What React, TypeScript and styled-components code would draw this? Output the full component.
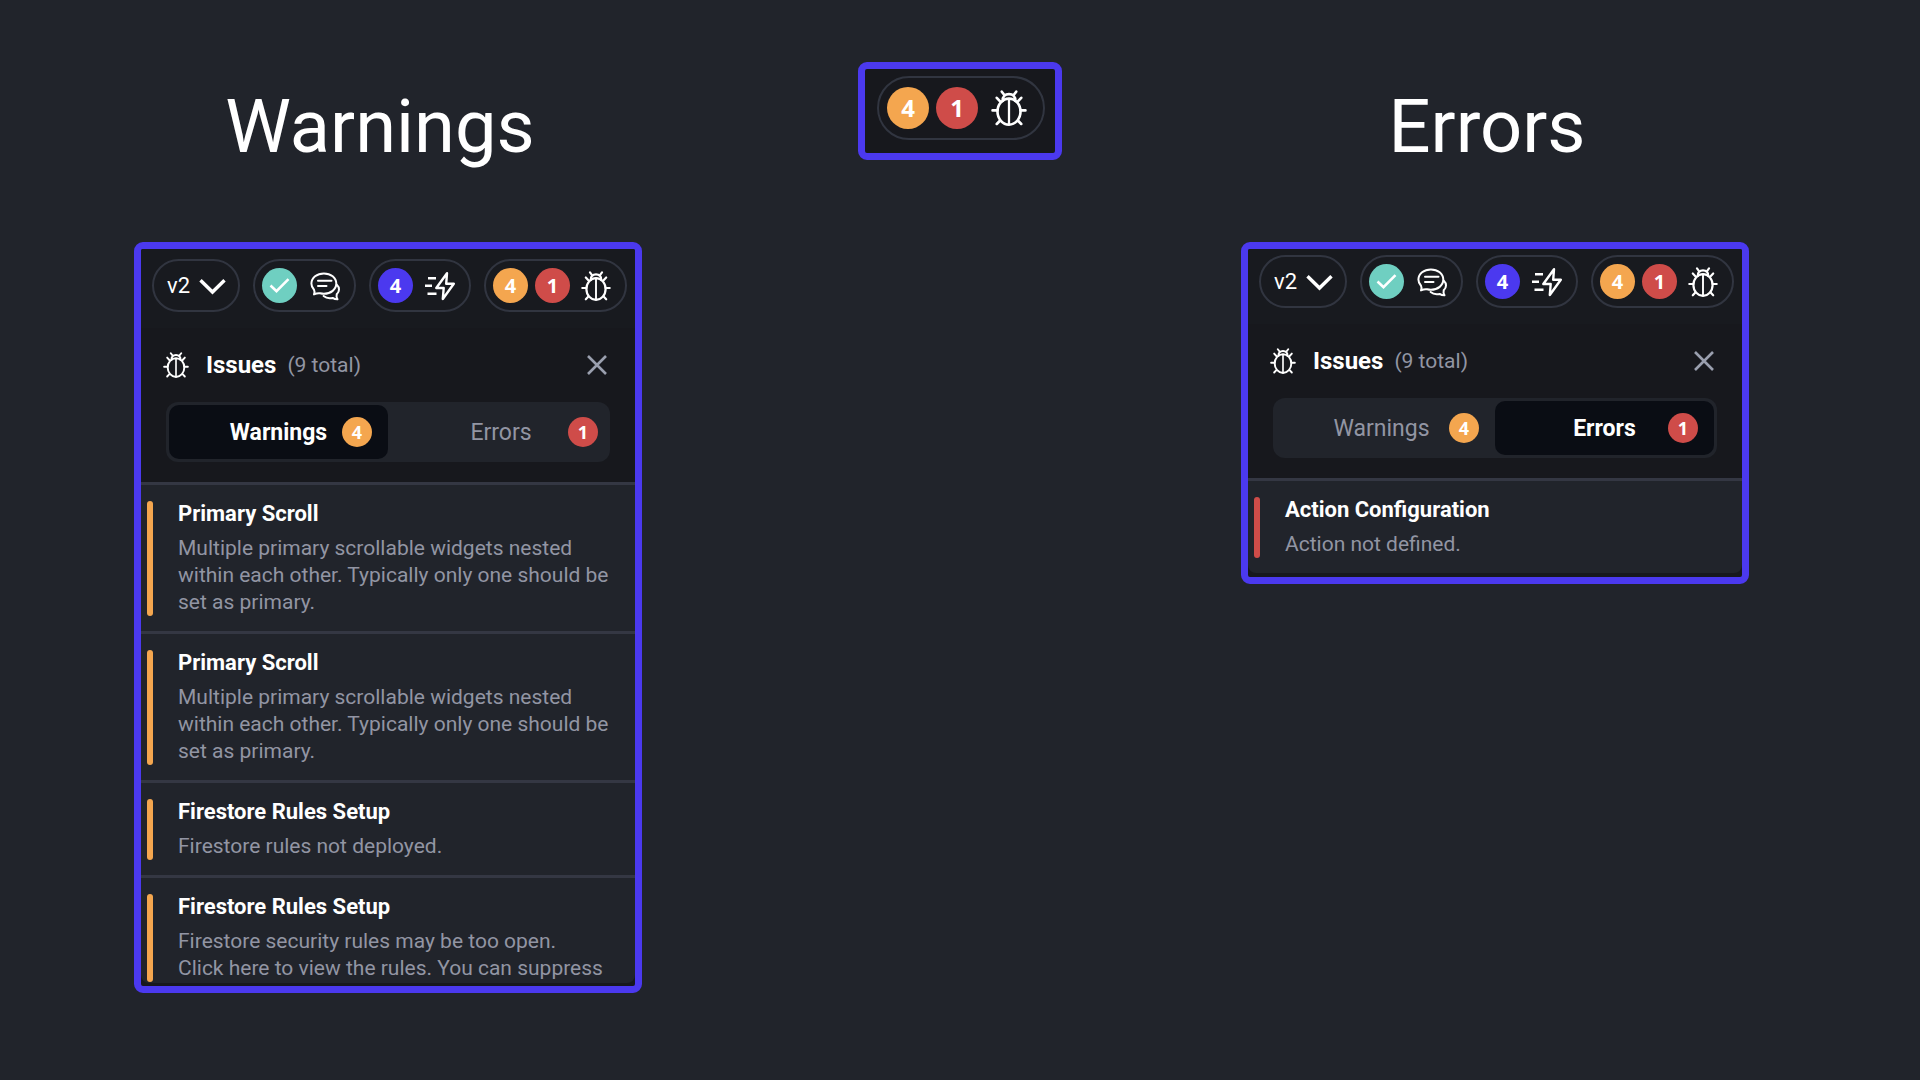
import React from 'react';
import styled, { createGlobalStyle, css } from 'styled-components';

const color = {
  page: '#21242b',
  bar: '#181a1f',
  panel: '#17181d',
  frame: '#4b39ef',
  outline: '#313540',
  divider: '#343743',
  text: '#ffffff',
  muted: '#9295a3',
  warning: '#f4a64f',
  error: '#cf4c49',
  success: '#6fcfc1',
  activeTab: '#0a0d14',
};

type Tone = 'warning' | 'error' | 'success' | 'frame';
type Size = 'small' | 'large';

const GlobalStyle = createGlobalStyle`
  *, *::before, *::after { box-sizing: border-box; }
  body {
    margin: 0;
    background: ${color.page};
    color: ${color.text};
    font-family: Roboto, "Open Sans", sans-serif;
  }
  h1, h2, h3, p, ul { margin: 0; padding: 0; }
  ul { list-style: none; }
  button {
    margin: 0;
    padding: 0;
    border: 0;
    background: none;
    color: inherit;
    font: inherit;
    cursor: pointer;
  }
  svg { display: block; flex: none; }
`;

const Page = styled.main`
  display: grid;
  grid-template-columns: minmax(0, 1fr) auto minmax(0, 1fr);
  align-items: start;
  min-height: 100vh;
  padding: 62px 0 48px;
`;

const Column = styled.section<{ $side: 'left' | 'right' }>`
  display: flex;
  flex-direction: column;
  gap: 70px;
  width: 100%;
  max-width: 508px;
  justify-self: ${(p) => (p.$side === 'left' ? 'start' : 'end')};
  ${(p) =>
    p.$side === 'left'
      ? css`margin-left: 134px;`
      : css`margin-right: 171px;`}
`;

const Heading = styled.h1`
  padding: 20px 16px 0 0;
  font-size: 74px;
  font-weight: 400;
  line-height: 90px;
  text-align: center;
`;

const Frame = styled.div`
  overflow: hidden;
  border: 7px solid ${color.frame};
  border-radius: 9px;
  background: ${color.panel};
`;

const Summary = styled(Frame)`
  padding: 7px 10px 13px 12px;
`;

const Toolbar = styled.div<{ $top: number }>`
  display: flex;
  gap: 13px;
  padding: ${(p) => p.$top}px 8px 16px 11px;
  background: ${color.bar};
`;

const Pill = styled.button<{ $size?: Size }>`
  display: flex;
  align-items: center;
  gap: 7px;
  border: 2px solid ${color.outline};
  border-radius: 32px;
  ${(p) =>
    p.$size === 'large'
      ? css`
          height: 64px;
          padding: 0 16px 0 8px;
          > svg { margin-left: 6px; }
        `
      : css`
          height: 53px;
          padding: 0 14px 0 7px;
          > svg { margin-left: 4px; }
        `}
`;

const VersionPill = styled(Pill)`
  gap: 5px;
  padding: 0 12px 0 13px;
  font-size: 22px;
`;

const badgeSizes = {
  tab: css`width: 30px; height: 30px; font-size: 18px;`,
  small: css`width: 35px; height: 35px; font-size: 20px;`,
  large: css`width: 42px; height: 42px; font-size: 24px;`,
};

const Badge = styled.span<{ $tone: Tone; $size: keyof typeof badgeSizes }>`
  display: inline-flex;
  align-items: center;
  justify-content: center;
  flex: none;
  border-radius: 50%;
  background: ${(p) => color[p.$tone]};
  color: ${color.text};
  font-family: "Open Sans", sans-serif;
  font-weight: 700;
  line-height: 1;
  ${(p) => badgeSizes[p.$size]}
`;

const Header = styled.header`
  display: flex;
  align-items: center;
  height: 74px;
  padding: 0 27px 0 22px;
`;

const Title = styled.h2`
  margin-left: 17px;
  font-size: 24px;
  font-weight: 700;
`;

const Total = styled.span`
  margin-left: 11px;
  color: ${color.muted};
  font-size: 21px;
`;

const CloseButton = styled.button`
  margin-left: auto;
  color: #9a9fae;
`;

const Tabs = styled.div`
  display: grid;
  grid-template-columns: 1fr 1fr;
  height: 60px;
  margin: 0 25px 20px;
  padding: 3px;
  border-radius: 12px;
  background: ${color.page};
`;

const Tab = styled.button<{ $active: boolean; $last: boolean }>`
  display: grid;
  grid-template-columns: 1fr auto 1fr;
  align-items: center;
  padding: ${(p) => (p.$active ? '0 16px' : p.$last ? '0 9px 0 16px' : '0 16px 0 8px')};
  border-radius: 10px;
  background: ${(p) => (p.$active ? color.activeTab : 'transparent')};
  color: ${(p) => (p.$active ? color.text : color.muted)};
  font-size: 23px;
  font-weight: ${(p) => (p.$active ? 700 : 400)};

  span:first-child { grid-column: 2; }
  span:last-child { justify-self: end; }
`;

const List = styled.ul<{ $foot: number }>`
  max-height: 501px;
  overflow: hidden;
  border-radius: 0 0 8px 8px;
  background: ${color.page};
  margin-bottom: ${(p) => p.$foot}px;
`;

const Item = styled.li`
  display: flex;
  gap: 25px;
  padding: 16px 20px 15px 6px;
  border-top: 3px solid ${color.divider};
`;

const Stripe = styled.span<{ $tone: Tone }>`
  flex: none;
  width: 6px;
  border-radius: 3px;
  background: ${(p) => color[p.$tone]};
`;

const ItemTitle = styled.h3`
  padding-bottom: 9px;
  font-size: 22px;
  font-weight: 700;
  line-height: 25px;
`;

const ItemText = styled.p`
  color: ${color.muted};
  font-size: 21px;
  line-height: 27px;
`;

const Line = styled.span`
  display: block;
  white-space: nowrap;
`;

const BugIcon = ({ size }: { size: number }) => (
  <svg width={size} height={size} viewBox="0 0 30 30" fill="none" stroke="currentColor" strokeWidth="2.200" strokeLinecap="round" aria-hidden="true">
    <ellipse cx="15" cy="18" rx="9.600" ry="10.800" />
    <path d="M15 7.500v21" strokeWidth="1.900" />
    <path d="M9.800 9C9.400 5.400 11.800 3.400 15 3.400s5.600 2 5.200 5.600" />
    <path d="M10.800 3.800 9 1.400M19.200 3.800 21 1.400" />
    <path d="M7.600 9.500 4.800 6.500M22.400 9.500l2.800-3" />
    <path d="M5.400 17H1.300M24.600 17h4.100" />
    <path d="M7.400 25.600 4.800 28.300M22.600 25.600l2.600 2.700" />
  </svg>
);

const ChevronIcon = () => (
  <svg width="27" height="18" viewBox="0 0 27 18" fill="none" stroke="currentColor" strokeWidth="3.400" aria-hidden="true">
    <path d="M1.500 3.200 13.500 15 25.500 3.200" />
  </svg>
);

const CheckIcon = () => (
  <svg width="21" height="17" viewBox="0 0 21 17" fill="none" stroke="currentColor" strokeWidth="2.600" aria-hidden="true">
    <path d="M1.500 8.500 7.500 14.200 19.500 2.200" />
  </svg>
);

const ChatIcon = () => (
  <svg width="32" height="30" viewBox="-2 0 32 30" fill="none" stroke="currentColor" strokeWidth="2" strokeLinecap="round" strokeLinejoin="round" aria-hidden="true">
    <path d="M4 23.400c.8-1.900.7-3.300 0-4.600-1.600-1.700-2.600-3.800-2.600-6.200 0-5.800 5.600-10.200 12.500-10.200s12.400 4.400 12.400 10.200S20.800 22.800 13.900 22.800c-1.300 0-2.500-.2-3.700-.5-2-.4-4.200.2-6.200 1.100Z" />
    <path d="M8 9.700h13.500M8 15h8.500" />
    <path d="M26.800 13.800c1.400 1.300 2.200 2.800 2.200 4.600 0 1.900-.9 3.500-2.300 4.900-.4 1.500-.3 3.100.8 5-1.900 0-3.600-.5-4.900-1.400-3.200.7-6.700.1-9-1.900" />
  </svg>
);

const BoltIcon = () => (
  <svg width="31" height="30" viewBox="0 0 31 30" fill="none" stroke="currentColor" strokeWidth="2.400" strokeLinejoin="round" strokeLinecap="round" aria-hidden="true">
    <path d="M23 2.200 12.300 17h7.400l-.9 11L29.800 12.800h-7.600Z" />
    <path d="M4 7.200h8M1 14.800h7M3.500 22.800h9" strokeLinecap="butt" />
  </svg>
);

const CloseIcon = () => (
  <svg width="22" height="22" viewBox="0 0 22 22" fill="none" stroke="currentColor" strokeWidth="2.600" aria-hidden="true">
    <path d="m2 2 18 18M20 2 2 20" />
  </svg>
);

const IssuesPill = ({ size }: { size: Size }) => (
  <Pill type="button" $size={size} aria-label="Issues: 4 warnings, 1 error">
    <Badge $tone="warning" $size={size}>4</Badge>
    <Badge $tone="error" $size={size}>1</Badge>
    <BugIcon size={size === 'large' ? 36 : 30} />
  </Pill>
);

type Issue = { title: string; lines: string[] };

const nestedScroll: Issue = {
  title: 'Primary Scroll',
  lines: [
    'Multiple primary scrollable widgets nested',
    'within each other. Typically only one should be',
    'set as primary.',
  ],
};

const warnings: Issue[] = [
  nestedScroll,
  nestedScroll,
  { title: 'Firestore Rules Setup', lines: ['Firestore rules not deployed.'] },
  {
    title: 'Firestore Rules Setup',
    lines: [
      'Firestore security rules may be too open.',
      'Click here to view the rules. You can suppress',
    ],
  },
];

const errors: Issue[] = [
  { title: 'Action Configuration', lines: ['Action not defined.'] },
];

type PanelProps = { tone: 'warning' | 'error'; issues: Issue[]; top: number; foot: number };

const IssuesPanel = ({ tone, issues, top, foot }: PanelProps) => {
  const onWarnings = tone === 'warning';
  return (
    <Frame>
      <Toolbar $top={top}>
        <VersionPill type="button">
          v2
          <ChevronIcon />
        </VersionPill>
        <Pill type="button" aria-label="Comments">
          <Badge $tone="success" $size="small"><CheckIcon /></Badge>
          <ChatIcon />
        </Pill>
        <Pill type="button" aria-label="Actions">
          <Badge $tone="frame" $size="small">4</Badge>
          <BoltIcon />
        </Pill>
        <IssuesPill size="small" />
      </Toolbar>
      <Header>
        <BugIcon size={26} />
        <Title>Issues</Title>
        <Total>(9 total)</Total>
        <CloseButton type="button" aria-label="Close">
          <CloseIcon />
        </CloseButton>
      </Header>
      <Tabs role="tablist">
        <Tab type="button" role="tab" aria-selected={onWarnings} $active={onWarnings} $last={false}>
          <span>Warnings</span>
          <Badge $tone="warning" $size="tab">4</Badge>
        </Tab>
        <Tab type="button" role="tab" aria-selected={!onWarnings} $active={!onWarnings} $last>
          <span>Errors</span>
          <Badge $tone="error" $size="tab">1</Badge>
        </Tab>
      </Tabs>
      <List $foot={foot}>
        {issues.map((issue, index) => (
          <Item key={index}>
            <Stripe $tone={tone} />
            <div>
              <ItemTitle>{issue.title}</ItemTitle>
              <ItemText>
                {issue.lines.map((line) => (
                  <Line key={line}>{line}</Line>
                ))}
              </ItemText>
            </div>
          </Item>
        ))}
      </List>
    </Frame>
  );
};

export default function App() {
  return (
    <>
      <GlobalStyle />
      <Page>
        <Column $side="left">
          <Heading>Warnings</Heading>
          <IssuesPanel tone="warning" issues={warnings} top={10} foot={3} />
        </Column>
        <Summary>
          <IssuesPill size="large" />
        </Summary>
        <Column $side="right">
          <Heading>Errors</Heading>
          <IssuesPanel tone="error" issues={errors} top={6} foot={4} />
        </Column>
      </Page>
    </>
  );
}
